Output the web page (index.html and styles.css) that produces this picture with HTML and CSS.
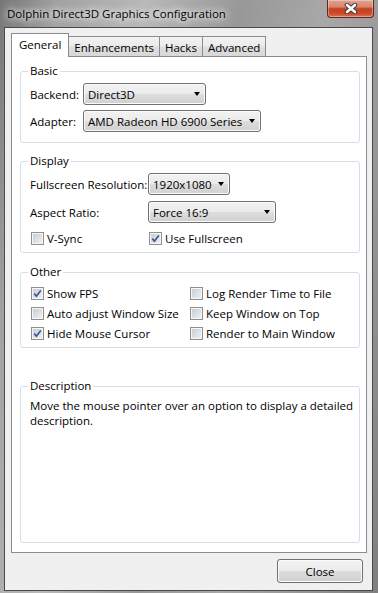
FILE: index.html
```html
<!DOCTYPE html>
<html lang="en">
<head>
  <meta charset="UTF-8">
  <meta name="viewport" content="width=device-width, initial-scale=1.0">
  <title>Dolphin Direct3D Graphics Configuration</title>
  <link rel="stylesheet" href="styles.css">
</head>
<body>
  <div class="window">
    <div class="titlebar">
      <span class="title">Dolphin Direct3D Graphics Configuration</span>
      <button class="close-x" aria-label="Close">
        <svg width="14" height="11" viewBox="0 0 14 11">
          <path d="M3 2 L11 9 M11 2 L3 9" stroke="#3c3c3c" stroke-width="4.6" stroke-linecap="round"/>
          <path d="M3 2 L11 9 M11 2 L3 9" stroke="#fff" stroke-width="2.6" stroke-linecap="round"/>
        </svg>
      </button>
    </div>

    <div class="client">
      <div class="tabs">
        <span class="tab active">General</span>
        <span class="tab">Enhancements</span>
        <span class="tab">Hacks</span>
        <span class="tab">Advanced</span>
      </div>

      <div class="panel">
        <fieldset class="group">
          <legend>Basic</legend>
          <div class="grid grid-basic">
            <span>Backend:</span>
            <div class="combo w-backend">Direct3D</div>
            <span>Adapter:</span>
            <div class="combo w-adapter">AMD Radeon HD 6900 Series</div>
          </div>
        </fieldset>

        <fieldset class="group display">
          <legend>Display</legend>
          <div class="grid grid-display">
            <span>Fullscreen Resolution:</span>
            <div class="combo w-res">1920x1080</div>
            <span>Aspect Ratio:</span>
            <div class="combo w-aspect">Force 16:9</div>
            <label class="check"><span class="box"></span>V-Sync</label>
            <label class="check"><span class="box on"><svg width="9" height="9" viewBox="0 0 9 9"><path d="M1.3 4.6 L3.4 7.2 L7.8 1.4" fill="none" stroke="#3e5494" stroke-width="1.7"/></svg></span>Use Fullscreen</label>
          </div>
        </fieldset>

        <fieldset class="group other">
          <legend>Other</legend>
          <div class="grid grid-other">
            <label class="check"><span class="box on"><svg width="9" height="9" viewBox="0 0 9 9"><path d="M1.3 4.6 L3.4 7.2 L7.8 1.4" fill="none" stroke="#3e5494" stroke-width="1.7"/></svg></span>Show FPS</label>
            <label class="check"><span class="box"></span>Log Render Time to File</label>
            <label class="check"><span class="box"></span>Auto adjust Window Size</label>
            <label class="check"><span class="box"></span>Keep Window on Top</label>
            <label class="check"><span class="box on"><svg width="9" height="9" viewBox="0 0 9 9"><path d="M1.3 4.6 L3.4 7.2 L7.8 1.4" fill="none" stroke="#3e5494" stroke-width="1.7"/></svg></span>Hide Mouse Cursor</label>
            <label class="check"><span class="box"></span>Render to Main Window</label>
          </div>
        </fieldset>

        <fieldset class="group description">
          <legend>Description</legend>
          <p>Move the mouse pointer over an option to display a detailed description.</p>
        </fieldset>
      </div>

      <div class="footer">
        <button class="btn">Close</button>
      </div>
    </div>
  </div>
</body>
</html>
```

FILE: styles.css
```css
body { margin: 0; font-family: "Open Sans", "Noto Sans", sans-serif; font-size: 11.5px; color: #000; }

.window {
  width: 378px; height: 593px; display: flex; flex-direction: column; box-sizing: border-box;
  background: linear-gradient(100deg, #767676 0%, #a2a2a2 12%, #b9b9b9 30%, #989898 50%, #a8a8a8 68%, #959595 85%, #7f7f7f 100%);
}
.titlebar { height: 27px; display: flex; align-items: flex-start; flex-shrink: 0; }
.title {
  padding: 6px 0 0 7px; line-height: 16px;
  text-shadow: 0 0 6px #fff, 0 0 10px rgba(255,255,255,.8), 0 0 14px rgba(255,255,255,.6);
}
.close-x {
  margin-left: auto; margin-right: 4px; width: 47px; height: 18px; padding: 0;
  border: 1px solid #5a2b22; border-top: none; border-radius: 0 0 4px 4px;
  background: linear-gradient(#e2a28f, #d8856e 40%, #c5401f 52%, #cf4a2a 80%, #dc7456);
  box-shadow: inset 0 0 0 1px rgba(255,255,255,.35);
  display: flex; align-items: center; justify-content: center;
}

.client {
  flex: 1; margin: 0 5px 2px 4px; border: 1px solid #4a4a4a; background: #f0f0f0;
  display: flex; flex-direction: column; padding: 5px 5px 0 6px; min-height: 0;
}

.tabs { display: flex; align-items: flex-end; height: 23px; flex-shrink: 0; }
.tab {
  box-sizing: border-box; height: 20px; padding: 3px 5px 0; line-height: 16px;
  border: 1px solid #898c95; border-bottom: none; margin-left: -1px;
  background: linear-gradient(#f3f3f3, #ebebeb 45%, #dedede 55%, #d8d8d8);
}
.tab.active {
  height: 24px; margin-left: 0; margin-bottom: -1px; padding: 3px 7px 0 7px;
  background: #fff; position: relative; z-index: 1;
}
.tab.active + .tab { margin-left: 0; border-left: none; }

.panel {
  flex: 1; background: #fff; border: 1px solid #898c95;
  display: flex; flex-direction: column; padding: 6px 6px 9px 8px; min-height: 0;
}

.group { margin: 0; border: 1px solid #d5dfe5; border-radius: 3px; padding: 4px 2px 10px 9px; min-width: 0; }
.group legend { padding: 0 2px; margin-left: -2px; line-height: 16px; }
.display { margin-top: 10px; padding-bottom: 5px; }
.other { margin-top: 11px; padding-top: 3px; padding-bottom: 4px; }
.description { margin-top: 30px; flex: 1; }
.description p { margin: 0; line-height: 15px; }

.grid { display: grid; align-items: center; justify-items: start; }
.grid-basic { grid-template-columns: 53px auto; grid-template-rows: 22px 22px; row-gap: 5px; }
.grid-display { grid-template-columns: 118px auto; grid-template-rows: 22px 22px 18px; row-gap: 6px; }
.grid-other { grid-template-columns: 159px auto; grid-auto-rows: 20px; }

.combo {
  box-sizing: border-box; height: 22px; display: flex; align-items: center;
  border: 1px solid #707070; border-radius: 3px; padding: 0 5px 0 4px;
  background: linear-gradient(#f2f2f2, #ebebeb 48%, #dddddd 52%, #d0d0d0);
  box-shadow: inset 0 0 0 1px #fbfbfb;
}
.combo::after {
  content: ""; margin-left: auto;
  border-top: 4px solid #000; border-left: 3.5px solid transparent; border-right: 3.5px solid transparent;
}
.w-backend { width: 123px; }
.w-adapter { width: 178px; }
.w-res { width: 82px; }
.w-aspect { width: 128px; }

.check { display: flex; align-items: center; gap: 3px; margin-left: 1px; }
.box {
  box-sizing: border-box; width: 13px; height: 13px; padding: 1px;
  border: 1px solid #8e8f8f;
  background: linear-gradient(135deg, #c9cdd3, #eef0f2) content-box, #f6f6f6;
  display: flex; align-items: center; justify-content: center;
}
.box svg { display: block; }

.footer { display: flex; justify-content: flex-end; padding: 6px 4px 7px 0; flex-shrink: 0; }
.btn {
  width: 86px; height: 24px; font: inherit; color: #000;
  border: 1px solid #707070; border-radius: 3px;
  background: linear-gradient(#f2f2f2, #ebebeb 48%, #dddddd 52%, #cfcfcf);
  box-shadow: inset 0 0 0 1px #fbfbfb;
}
```
